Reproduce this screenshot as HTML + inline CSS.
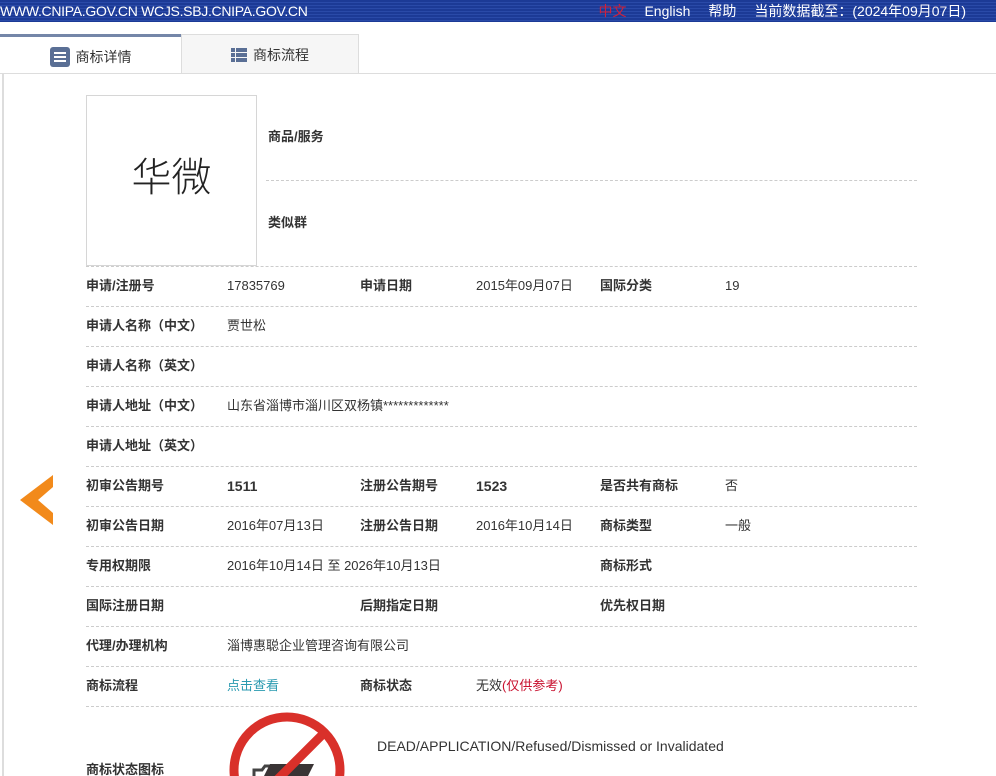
<!DOCTYPE html>
<html><head><meta charset="utf-8"><style>
*{margin:0;padding:0;box-sizing:border-box}
html,body{width:996px;height:776px;overflow:hidden}
body{background:#fff;font-family:"Liberation Sans","Noto Sans CJK SC",sans-serif;font-size:13px;color:#333;position:relative}
.top{position:absolute;left:0;top:0;width:996px;height:22px;background:repeating-linear-gradient(#1c3a96 0 2px,#2a4aa8 2px 3px);color:#fff;font-size:14px;line-height:22px}
.top .l{position:absolute;left:0;top:0;letter-spacing:-0.3px}
.top .r{position:absolute;right:30px;top:0;font-size:14px}
.top .r span{margin-left:18px}
.tab1{position:absolute;left:0;top:34px;width:181px;height:40px;border-top:3px solid #7486a8;background:#fff;font-size:14px;line-height:40px;text-align:center;color:#333}
.tab2{position:absolute;left:181px;top:34px;width:178px;height:40px;border:1px solid #ddd;border-bottom:none;background:#f6f6f6;font-size:14px;line-height:40px;text-align:center;color:#333}
.hl{position:absolute;left:0;top:73px;width:996px;height:1px;background:#ddd}
.vl{position:absolute;left:2px;top:74px;width:2px;height:702px;background:#ddd}
.img{position:absolute;left:86px;top:95px;width:171px;height:171px;border:1px solid #d6d6d6;font-family:"Noto Sans CJK SC",sans-serif;font-size:40px;line-height:156px;text-align:center;color:#222;font-weight:300}
.t{position:absolute;font-size:13px;white-space:nowrap;line-height:16px}
.b{font-weight:bold;color:#333}
.sep{position:absolute;left:86px;width:831px;border-top:1px dashed #ccc}
.arrow{position:absolute;left:20px;top:475px}
</style></head><body>
<div class="top"><div class="l">WWW.CNIPA.GOV.CN WCJS.SBJ.CNIPA.GOV.CN</div>
<div class="r"><span style="color:#d0213a">中文</span><span>English</span><span>帮助</span><span>当前数据截至：(2024年09月07日)</span></div></div>
<div class="tab1"><svg width="20" height="20" viewBox="0 0 20 20" style="vertical-align:-5px;margin-right:6px"><rect x="0" y="0" width="20" height="20" rx="3" fill="#5a6f95"/><rect x="4" y="5" width="12" height="2" fill="#fff"/><rect x="4" y="9" width="12" height="2" fill="#fff"/><rect x="4" y="13" width="12" height="2" fill="#fff"/></svg>商标详情</div>
<div class="tab2"><svg width="16" height="14" viewBox="0 0 16 14" style="vertical-align:-2px;margin-right:6px"><rect x="0" y="0" width="4" height="4" fill="#5a6f95"/><rect x="5" y="0" width="11" height="4" fill="#5a6f95"/><rect x="0" y="5" width="4" height="4" fill="#5a6f95"/><rect x="5" y="5" width="11" height="4" fill="#5a6f95"/><rect x="0" y="10" width="4" height="4" fill="#5a6f95"/><rect x="5" y="10" width="11" height="4" fill="#5a6f95"/></svg>商标流程</div>
<div class="hl"></div><div class="vl"></div>
<div class="img">华微</div>
<div class="t b" style="left:268px;top:129px">商品/服务</div>
<div class="sep" style="left:266px;width:651px;top:180px"></div>
<div class="t b" style="left:268px;top:215px">类似群</div>
<div class="sep" style="top:266px"></div>

<div class="t b" style="left:86px;top:278px">申请/注册号</div><div class="t" style="left:227px;top:278px">17835769</div><div class="t b" style="left:360px;top:278px">申请日期</div><div class="t" style="left:476px;top:278px">2015年09月07日</div><div class="t b" style="left:600px;top:278px">国际分类</div><div class="t" style="left:725px;top:278px">19</div>
<div class="sep" style="top:306px"></div>
<div class="t b" style="left:86px;top:318px">申请人名称（中文）</div><div class="t" style="left:227px;top:318px">贾世松</div>
<div class="sep" style="top:346px"></div>
<div class="t b" style="left:86px;top:358px">申请人名称（英文）</div>
<div class="sep" style="top:386px"></div>
<div class="t b" style="left:86px;top:398px">申请人地址（中文）</div><div class="t" style="left:227px;top:398px">山东省淄博市淄川区双杨镇*************</div>
<div class="sep" style="top:426px"></div>
<div class="t b" style="left:86px;top:438px">申请人地址（英文）</div>
<div class="sep" style="top:466px"></div>
<div class="t b" style="left:86px;top:478px">初审公告期号</div><div class="t b" style="left:227px;top:478px;font-size:14px">1511</div><div class="t b" style="left:360px;top:478px">注册公告期号</div><div class="t b" style="left:476px;top:478px;font-size:14px">1523</div><div class="t b" style="left:600px;top:478px">是否共有商标</div><div class="t" style="left:725px;top:478px">否</div>
<div class="sep" style="top:506px"></div>
<div class="t b" style="left:86px;top:518px">初审公告日期</div><div class="t" style="left:227px;top:518px">2016年07月13日</div><div class="t b" style="left:360px;top:518px">注册公告日期</div><div class="t" style="left:476px;top:518px">2016年10月14日</div><div class="t b" style="left:600px;top:518px">商标类型</div><div class="t" style="left:725px;top:518px">一般</div>
<div class="sep" style="top:546px"></div>
<div class="t b" style="left:86px;top:558px">专用权期限</div><div class="t" style="left:227px;top:558px">2016年10月14日 至 2026年10月13日</div><div class="t b" style="left:600px;top:558px">商标形式</div>
<div class="sep" style="top:586px"></div>
<div class="t b" style="left:86px;top:598px">国际注册日期</div><div class="t b" style="left:360px;top:598px">后期指定日期</div><div class="t b" style="left:600px;top:598px">优先权日期</div>
<div class="sep" style="top:626px"></div>
<div class="t b" style="left:86px;top:638px">代理/办理机构</div><div class="t" style="left:227px;top:638px">淄博惠聪企业管理咨询有限公司</div>
<div class="sep" style="top:666px"></div>
<div class="t b" style="left:86px;top:678px">商标流程</div><div class="t" style="left:227px;top:678px;color:#2a9ab0">点击查看</div><div class="t b" style="left:360px;top:678px">商标状态</div><div class="t" style="left:476px;top:678px">无效<span style="color:#c8102e">(仅供参考)</span></div>
<div class="sep" style="top:706px"></div>
<div class="t b" style="left:86px;top:762px">商标状态图标</div>
<div class="t" style="left:377px;top:738px;font-size:14px;color:#333">DEAD/APPLICATION/Refused/Dismissed or Invalidated</div>
<svg style="position:absolute;left:226px;top:710px" width="124" height="66" viewBox="0 0 124 66"><circle cx="61" cy="60" r="53" fill="none" stroke="#d9302a" stroke-width="9"/><path d="M28 60 h8 l3-4 h10 l3 4 h20 v10 H28z" fill="none" stroke="#444" stroke-width="3"/><path d="M36 70 l8-16 h44 l-8 16z" fill="#3a3435"/><line x1="24" y1="97" x2="98" y2="23" stroke="#d9302a" stroke-width="9"/></svg>
<svg class="arrow" width="34" height="50" viewBox="0 0 34 50"><path d="M33 0 L0 25 L33 50 L33 38 L18 25 L33 12 Z" fill="#f28a1b"/></svg>
</body></html>
